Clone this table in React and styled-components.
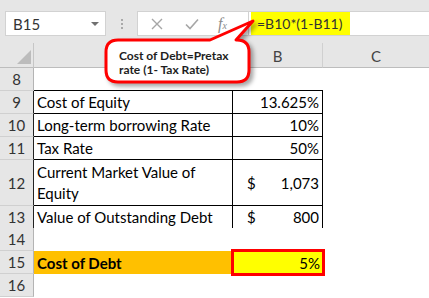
import React from 'react'
import styled, {createGlobalStyle} from 'styled-components'

const Global = createGlobalStyle`
    html, body {
        margin: 0;
        padding: 0;
        background: #ffffff;
        overflow: hidden;
    }
    body {
        font-family: 'Lato', 'Liberation Sans', sans-serif;
    }
`

const Page = styled.div`
    position: relative;
    width: 429px;
    height: 298px;
    overflow: hidden;
    display: flex;
    flex-direction: column;
    background: #fff;
`

// formula bar strip
const Toolbar = styled.div`
    height: 45px;
    flex: none;
    display: flex;
    align-items: flex-start;
    padding: 11px 0 0 5px;
    box-sizing: border-box;
    background: #e6e6e6;
    border-top: 2px solid #f2f2f2;
    margin-top: -2px;
`

const NameBox = styled.div`
    width: 101px;
    height: 25px;
    box-sizing: border-box;
    background: #fff;
    border: 1px solid #d2d2d2;
    display: flex;
    align-items: center;
    justify-content: space-between;
    padding: 0 6px 0 7px;
    font-size: 15px;
    color: #333;
`

const Caret = styled.span`
    width: 0;
    height: 0;
    border-left: 4px solid transparent;
    border-right: 4px solid transparent;
    border-top: 4px solid #707070;
`

const Dots = styled.div`
    width: 31px;
    height: 25px;
    display: flex;
    flex-direction: column;
    align-items: center;
    justify-content: center;
    gap: 2px;
    & span {
        width: 2px;
        height: 2px;
        background: #a9a9a9;
    }
`

const FxBox = styled.div`
    width: 111px;
    height: 25px;
    box-sizing: border-box;
    background: #fff;
    border: 1px solid #d2d2d2;
    border-right: none;
    display: flex;
    align-items: center;
    padding-left: 13px;
    gap: 22px;
`

const Fx = styled.span`
    font-family: 'Liberation Serif', serif;
    font-style: italic;
    font-size: 16px;
    color: #8c8c8c;
    margin-left: -3px;
    & small {
        font-size: 10px;
    }
`

const FormulaBox = styled.div`
    flex: 1;
    height: 25px;
    box-sizing: border-box;
    background: #fff;
    border: 1px solid #d2d2d2;
    border-right: none;
    padding: 0 0 0 2px;
    display: flex;
`

const Highlight = styled.span`
    background: #ffff00;
    color: #333;
    font-size: 14px;
    padding: 0 8px 0 6px;
    display: flex;
    align-items: center;
`

// sheet grid
const Sheet = styled.div`
    flex: 1;
    display: flex;
    flex-direction: column;
`

const Row = styled.div`
    display: grid;
    grid-template-columns: 34px 199px 90px 1fr;
    height: ${p => p.$h || 23}px;
    flex: none;
`

const Corner = styled.div`
    background: #e6e6e6;
    border-right: 1px solid #c6c6c6;
    border-bottom: 1px solid #bdbdbd;
    position: relative;
    &::after {
        content: '';
        position: absolute;
        right: 2px;
        bottom: 3px;
        border-left: 14px solid transparent;
        border-bottom: 14px solid #bcbcbc;
    }
`

const ColHead = styled.div`
    background: #e6e6e6;
    border-bottom: 1px solid #bdbdbd;
    border-right: ${p => (p.$last ? 'none' : '1px solid #d0d0d0')};
    display: flex;
    align-items: center;
    justify-content: center;
    font-size: 15px;
    color: #444;
    padding-top: 2px;
`

const RowHead = styled.div`
    background: #e6e6e6;
    border-bottom: 1px solid #d0d0d0;
    border-right: 1px solid ${p => (p.$dark ? '#222' : '#b4b4b4')};
    display: flex;
    align-items: center;
    justify-content: center;
    font-size: 15px;
    color: #333;
`

const Cell = styled.div`
    box-sizing: border-box;
    background: ${p => p.$fill || '#fff'};
    border-bottom: ${p => (p.$bb ? '1px solid #000' : 'none')};
    border-right: ${p => (p.$br ? '1px solid #000' : 'none')};
    display: flex;
    align-items: center;
    justify-content: ${p => (p.$right ? 'flex-end' : 'flex-start')};
    padding: 1px 3px 0 3px;
    font-size: 15px;
    font-weight: ${p => (p.$bold ? 700 : 400)};
    line-height: 21px;
    color: #000;
    position: relative;
    ${p => p.$mark && `
        z-index: 1;
        box-shadow: 0 0 0 2px #ff0000, inset 0 0 0 1px #ff0000;
    `}
`

const Money = styled.div`
    flex: 1;
    display: flex;
    justify-content: space-between;
    padding-left: 11px;
`

// callout bubble over the sheet
const Callout = styled.div`
    position: absolute;
    left: 100px;
    top: 14px;
    width: 160px;
    height: 80px;
    & svg {
        position: absolute;
        inset: 0;
        overflow: visible;
        filter: drop-shadow(3px 3px 2px rgba(0, 0, 0, 0.35));
    }
`

const CalloutText = styled.div`
    position: absolute;
    left: 19px;
    top: 35px;
    font-size: 12px;
    font-weight: 700;
    line-height: 14px;
    color: #1e1e1e;
    white-space: nowrap;
`

const rows = [
    {n: 8, top: true},
    {n: 9, a: 'Cost of Equity', b: '13.625%', box: true},
    {n: 10, a: 'Long-term borrowing Rate', b: '10%', box: true},
    {n: 11, a: 'Tax Rate', b: '50%', box: true},
    {n: 12, a: 'Current Market Value of Equity', money: '1,073', box: true, h: 46},
    {n: 13, a: 'Value of Outstanding Debt', money: '800', box: true, h: 22},
    {n: 14},
    {n: 15, a: 'Cost of Debt', b: '5%', result: true},
    {n: 16},
]

export default function App() {
    return (
        <Page>
            <Global />
            <Toolbar>
                <NameBox>
                    B15
                    <Caret />
                </NameBox>
                <Dots>
                    <span />
                    <span />
                    <span />
                </Dots>
                <FxBox>
                    <svg width="12" height="12" viewBox="0 0 12 12">
                        <path d="M1 1 L11 11 M11 1 L1 11" stroke="#a6a6a6" strokeWidth="1.4" fill="none" />
                    </svg>
                    <svg width="14" height="12" viewBox="0 0 14 12">
                        <path d="M1 6.5 L5 10.5 L13 1.5" stroke="#a6a6a6" strokeWidth="1.6" fill="none" />
                    </svg>
                    <Fx>
                        f<small>x</small>
                    </Fx>
                </FxBox>
                <FormulaBox>
                    <Highlight>=B10*(1-B11)</Highlight>
                </FormulaBox>
            </Toolbar>

            <Sheet>
                <Row $h={25}>
                    <Corner />
                    <ColHead />
                    <ColHead>B</ColHead>
                    <ColHead $last>C</ColHead>
                </Row>
                {rows.map(r => (
                    <Row key={r.n} $h={r.h}>
                        <RowHead $dark={r.box}>{r.n}</RowHead>
                        <Cell
                            $bb={r.box || r.top}
                            $br={r.box}
                            $fill={r.result ? '#ffc000' : null}
                            $bold={r.result}>
                            {r.a}
                        </Cell>
                        <Cell
                            $bb={r.box || r.top}
                            $br={r.box}
                            $right
                            $fill={r.result ? '#ffff00' : null}
                            $mark={r.result}>
                            {r.money ? (
                                <Money>
                                    <span>$</span>
                                    <span>{r.money}</span>
                                </Money>
                            ) : (
                                r.b
                            )}
                        </Cell>
                        <Cell />
                    </Row>
                ))}
            </Sheet>

            <Callout>
                <svg width="160" height="80" viewBox="0 0 160 80">
                    <path
                        d="M18 26 L110 26 L153 7 L136 26 L137 26 Q149 26 149 38 L149 56 Q149 68 137 68 L18 68 Q6 68 6 56 L6 38 Q6 26 18 26 Z"
                        fill="#fff"
                        stroke="#ff0000"
                        strokeWidth="3"
                        strokeLinejoin="round"
                    />
                </svg>
                <CalloutText>
                    Cost of Debt=Pretax
                    <br />
                    rate (1- Tax Rate)
                </CalloutText>
            </Callout>
        </Page>
    )
}
